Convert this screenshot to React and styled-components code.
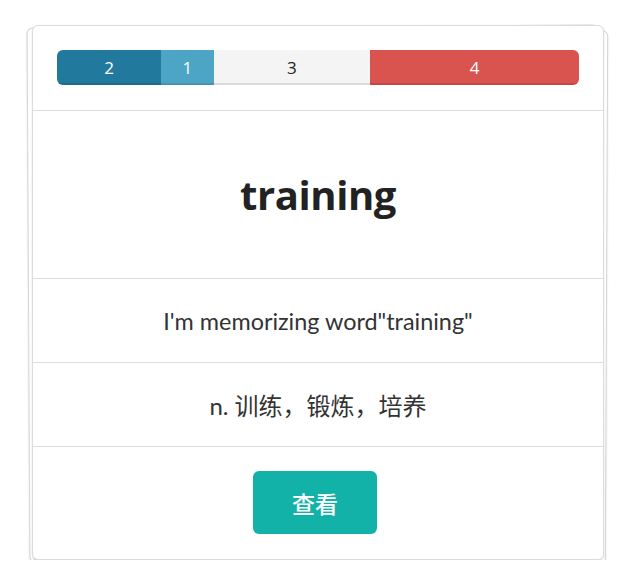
import React from "react";
import styled, { createGlobalStyle } from "styled-components";

const Global = createGlobalStyle`
  *, *::before, *::after { box-sizing: border-box; }
  html, body { margin: 0; padding: 0; background: #fff; }
  body { font-family: Lato, "Noto Sans CJK SC", sans-serif; color: #333; }
`;

const Page = styled.div`
  padding: 25px 27px 0 32px;
`;

const Stack = styled.div`
  position: relative;
  width: 572px;
  &::before, &::after {
    content: "";
    position: absolute;
    inset: 0;
    background: #fff;
    border: 1px solid #d6d6d6;
    border-radius: 6px;
    box-shadow: 0 1px 2px rgba(0,0,0,0.12);
  }
  &::before { transform: translate(-4px, 1px) rotate(-0.3deg); }
  &::after { transform: translate(3px, 4px) rotate(0.25deg); }
`;

const Card = styled.div`
  position: relative;
  z-index: 1;
  background: #fff;
  border: 1px solid #dcdcdc;
  border-radius: 6px;
  box-shadow: 0 1px 2px rgba(0,0,0,0.12);
`;

const Section = styled.div`
  display: flex;
  align-items: center;
  justify-content: center;
  height: ${(p) => p.$h}px;
  border-top: 1px solid #dedede;
`;

const HeaderSection = styled.div`
  padding: 24px 24px 25px 24px;
`;

const Progress = styled.div`
  display: flex;
  height: 35px;
  border-radius: 6px;
  overflow: hidden;
  background: #f4f4f4;
`;

const Seg = styled.div`
  width: ${(p) => p.$w}%;
  background: ${(p) => p.$bg};
  color: ${(p) => p.$fg};
  display: flex;
  align-items: center;
  justify-content: center;
  font-family: "Open Sans", sans-serif;
  font-size: 17px;
  box-shadow: inset 0 -2px 0 rgba(0,0,0,0.1);
`;

const Word = styled.h1`
  margin: 0;
  font-family: "Open Sans", sans-serif;
  font-weight: 700;
  font-size: 40px;
  color: #222;
  letter-spacing: -0.4px;
`;

const Sentence = styled.p`
  margin: 0;
  font-size: 23.4px;
  color: #333;
`;

const Meaning = styled.p`
  margin: 0;
  font-size: 24px;
  color: #333;
`;

const ButtonSection = styled.div`
  display: flex;
  justify-content: center;
  padding: 24px 0 25px;
  border-top: 1px solid #dedede;
`;

const Button = styled.button`
  width: 124px;
  height: 63px;
  margin-right: 6px;
  border: none;
  border-radius: 6px;
  background: #13b2a9;
  color: #fff;
  font-family: "Noto Sans CJK SC", sans-serif;
  font-weight: 500;
  font-size: 23px;
  cursor: pointer;
`;

const segs = [
  { n: 2, w: 20, bg: "#21799d", fg: "#fff" },
  { n: 1, w: 10, bg: "#4ca5c4", fg: "#fff" },
  { n: 3, w: 30, bg: "#f4f4f4", fg: "#222" },
  { n: 4, w: 40, bg: "#d9534f", fg: "#fff" },
];

export default function App() {
  return (
    <>
      <Global />
      <Page>
        <Stack>
          <Card>
            <HeaderSection>
              <Progress>
                {segs.map((s) => (
                  <Seg key={s.n} $w={s.w} $bg={s.bg} $fg={s.fg}>{s.n}</Seg>
                ))}
              </Progress>
            </HeaderSection>
            <Section $h={168}>
              <Word>training</Word>
            </Section>
            <Section $h={84}>
              <Sentence>I'm memorizing word"training"</Sentence>
            </Section>
            <Section $h={84}>
              <Meaning>n. 训练，锻炼，培养</Meaning>
            </Section>
            <ButtonSection>
              <Button>查看</Button>
            </ButtonSection>
          </Card>
        </Stack>
      </Page>
    </>
  );
}
